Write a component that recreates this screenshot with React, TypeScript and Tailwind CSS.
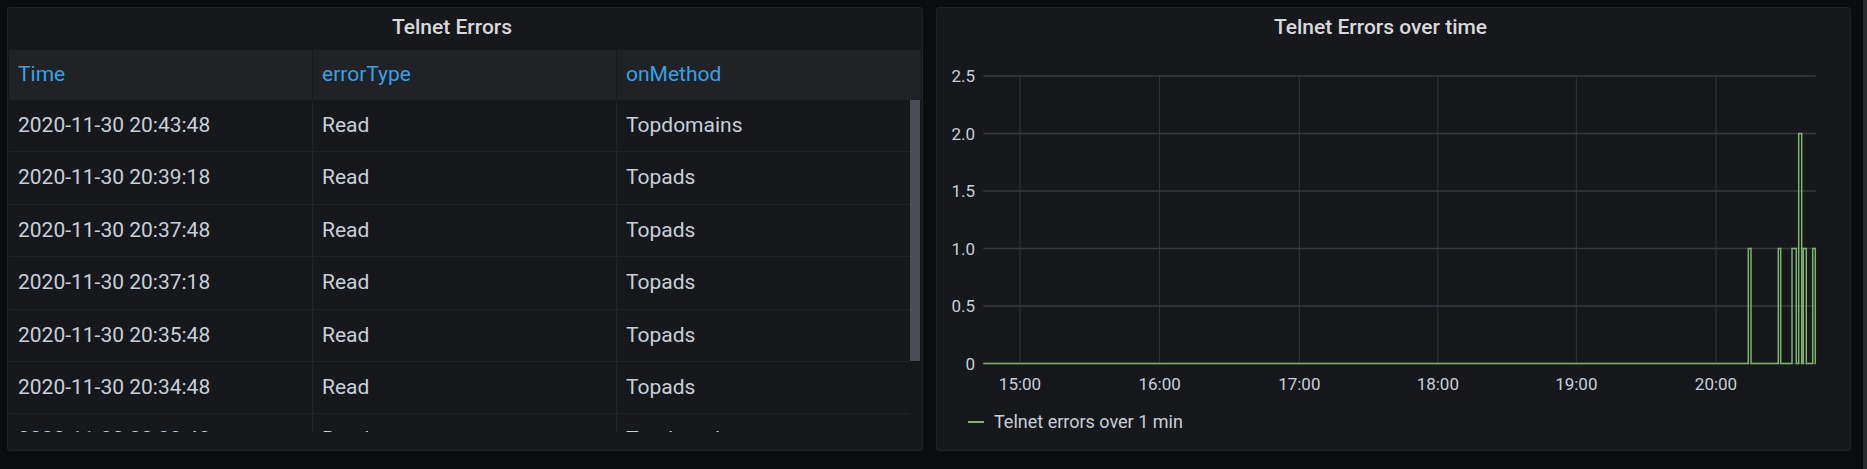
import React from "react";

const rows: [string, string, string][] = [
  ["2020-11-30 20:43:48", "Read", "Topdomains"],
  ["2020-11-30 20:39:18", "Read", "Topads"],
  ["2020-11-30 20:37:48", "Read", "Topads"],
  ["2020-11-30 20:37:18", "Read", "Topads"],
  ["2020-11-30 20:35:48", "Read", "Topads"],
  ["2020-11-30 20:34:48", "Read", "Topads"],
  ["2020-11-30 20:33:48", "Read", "Topdomains"],
  ["2020-11-30 20:27:18", "Read", "Topads"],
];

const yTicks = [
  { label: "2.5", y: 26 },
  { label: "2.0", y: 83.5 },
  { label: "1.5", y: 141 },
  { label: "1.0", y: 198.5 },
  { label: "0.5", y: 256 },
  { label: "0", y: 313.5 },
];

const xTicks = [
  { label: "15:00", x: 83 },
  { label: "16:00", x: 222.6 },
  { label: "17:00", x: 362.3 },
  { label: "18:00", x: 500.8 },
  { label: "19:00", x: 639.3 },
  { label: "20:00", x: 779 },
];

const series =
  "M 46.3 313.5 H 811.3 V 198.5 H 814 V 313.5 H 841.3 V 198.5 H 843.7 V 313.5 H 855 V 198.5 H 859.3 V 313.5 H 861.7 V 83.5 H 864.7 V 313.5 H 866.3 V 198.5 H 869.3 V 313.5 H 875.7 V 198.5 H 878.3 V 313.5 H 878.7";

function TablePanel() {
  return (
    <div className="w-[916px] h-[444px] rounded-[3px] border border-[#202226] bg-[#17181c] flex flex-col px-[1px] overflow-hidden">
      <div className="h-[42px] flex items-center justify-center pb-[4px] pr-[26px] text-[21px] font-medium text-[#d8d9da] leading-none">
        Telnet Errors
      </div>
      <div className="h-[50px] flex bg-[#212226] text-[#33a2e5] text-[21px]">
        <div className="w-[304px] flex items-center pl-[9px] border-r border-[#18191c]">Time</div>
        <div className="w-[304px] flex items-center pl-[9px] border-r border-[#18191c]">errorType</div>
        <div className="flex-1 flex items-center pl-[9px]">onMethod</div>
      </div>
      <div className="h-[332px] flex overflow-hidden">
        <div className="w-[902px] flex flex-col">
          {rows.map((r, i) => (
            <div
              key={i}
              className="h-[52.4px] shrink-0 flex border-b border-[#222327] text-[21px] text-[#c7d0d9]"
            >
              <div className="w-[304px] flex items-center pl-[9px] border-r border-[#222327]">{r[0]}</div>
              <div className="w-[304px] flex items-center pl-[9px] border-r border-[#222327]">{r[1]}</div>
              <div className="flex-1 flex items-center pl-[9px]">{r[2]}</div>
            </div>
          ))}
        </div>
        <div className="w-[11px] flex flex-col">
          <div className="h-[261px] w-[10px] bg-[#4b4d56] rounded-b-[1px]" />
        </div>
      </div>
    </div>
  );
}

function GraphPanel() {
  return (
    <div className="w-[915px] h-[444px] rounded-[3px] border border-[#202226] bg-[#17181c] flex flex-col overflow-hidden">
      <div className="h-[42px] flex items-center justify-center pb-[4px] pr-[26px] text-[21px] font-medium text-[#d8d9da] leading-none">
        Telnet Errors over time
      </div>
      <svg width={913} height={400} className="block" style={{ fontFamily: "Roboto, sans-serif" }}>
        {xTicks.map((t) => (
          <line key={t.label} x1={t.x} x2={t.x} y1={26} y2={313.5} stroke="#34363b" strokeWidth={1} />
        ))}
        {yTicks.map((t) => (
          <line key={t.label} x1={46.3} x2={878.7} y1={t.y} y2={t.y} stroke="#36383d" strokeWidth={1.5} />
        ))}
        {yTicks.map((t) => (
          <text
            key={t.label}
            x={38}
            y={t.y}
            textAnchor="end"
            dominantBaseline="central"
            fontSize={17}
            fill="#c7d0d9"
          >
            {t.label}
          </text>
        ))}
        {xTicks.map((t) => (
          <text
            key={t.label}
            x={t.x}
            y={333.5}
            textAnchor="middle"
            dominantBaseline="central"
            fontSize={17}
            fill="#c7d0d9"
          >
            {t.label}
          </text>
        ))}
        <path d={series} fill="none" stroke="#7eb26d" strokeWidth={1.5} />
        <line x1={31} x2={47} y1={372} y2={372} stroke="#7eb26d" strokeWidth={2} />
        <text x={57} y={371} dominantBaseline="central" fontSize={18} fill="#c7d0d9">
          Telnet errors over 1 min
        </text>
      </svg>
    </div>
  );
}

export default function App() {
  return (
    <div className="w-[1867px] h-[469px] bg-[#0b0c0e] flex font-[Roboto,sans-serif] overflow-hidden">
      <div className="flex gap-[13px] pl-[7px] pt-[7px]">
        <TablePanel />
        <GraphPanel />
      </div>
      <div className="ml-auto w-[4px] h-full bg-[#2a2b30]" />
    </div>
  );
}
